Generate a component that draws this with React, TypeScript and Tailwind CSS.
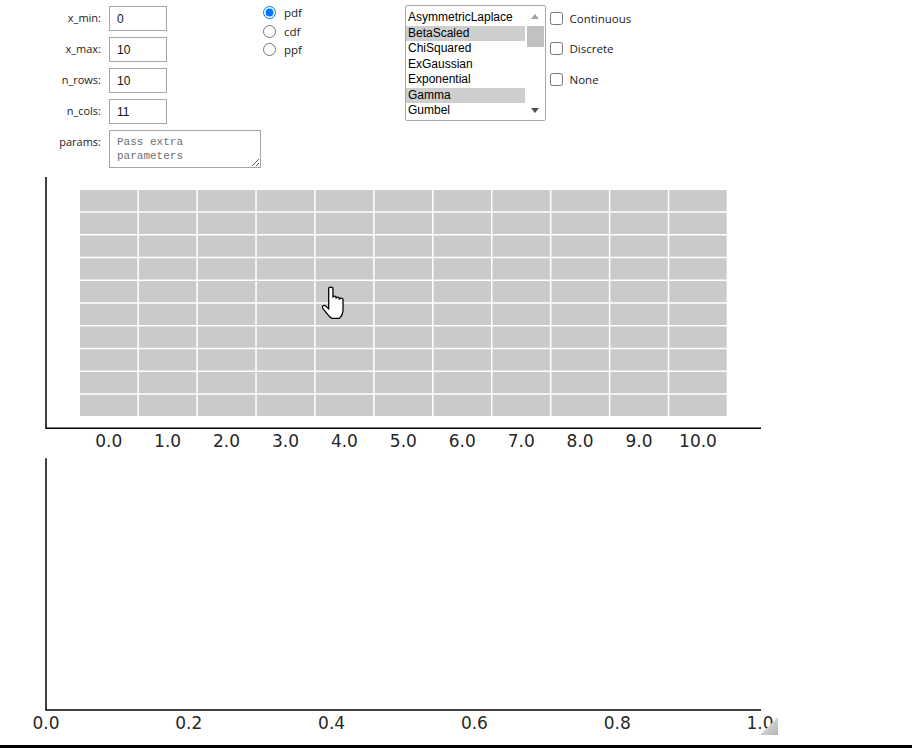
import React from 'react';

const labelFont = { fontFamily: '"Open Sans", "Noto Sans", sans-serif' };
const arial = { fontFamily: '"Liberation Sans", Arial, sans-serif' };
const plotFont = '"DejaVu Sans", sans-serif';

const fields = [
  { label: 'x_min:', value: '0' },
  { label: 'x_max:', value: '10' },
  { label: 'n_rows:', value: '10' },
  { label: 'n_cols:', value: '11' },
];

const dists = ['AsymmetricLaplace', 'BetaScaled', 'ChiSquared', 'ExGaussian', 'Exponential', 'Gamma', 'Gumbel'];
const selected = ['BetaScaled', 'Gamma'];

function HeatmapPlot() {
  const rows = 10;
  const cols = 11;
  const cells = [];
  for (let r = 0; r < rows; r++) {
    for (let c = 0; c < cols; c++) {
      cells.push(
        <rect key={`${r}-${c}`} x={80 + c * 58.93} y={20 + r * 22.75} width={57.4} height={21.25} fill="#cacaca" />
      );
    }
  }
  return (
    <svg width={912} height={288} className="block">
      {cells}
      <line x1={46} y1={7} x2={46} y2={258.3} stroke="#000" strokeWidth={1.5} />
      <line x1={45.3} y1={258.3} x2={761} y2={258.3} stroke="#000" strokeWidth={1.5} />
      {Array.from({ length: cols }).map((_, c) => (
        <text key={c} x={80 + c * 58.93 + 28.7} y={277} textAnchor="middle" fontSize={17} fill="#262626" fontFamily={plotFont}>
          {c.toFixed(1)}
        </text>
      ))}
    </svg>
  );
}

function LinePlot() {
  return (
    <svg width={912} height={287} className="block">
      <defs>
        <linearGradient id="grip" x1="0" y1="0" x2="1" y2="1">
          <stop offset="0" stopColor="#ececec" />
          <stop offset="1" stopColor="#b4b4b4" />
        </linearGradient>
      </defs>
      <line x1={46} y1={0.3} x2={46} y2={252} stroke="#000" strokeWidth={1.5} />
      <line x1={45.3} y1={252} x2={761} y2={252} stroke="#000" strokeWidth={1.5} />
      {[0, 0.2, 0.4, 0.6, 0.8, 1.0].map((v, i) => (
        <text key={i} x={46 + i * 142.8} y={271} textAnchor="middle" fontSize={17} fill="#262626" fontFamily={plotFont}>
          {v.toFixed(1)}
        </text>
      ))}
      <polygon points="778,259 778,277 760,277" fill="url(#grip)" />
    </svg>
  );
}

export default function App() {
  return (
    <div className="relative w-[912px] h-[748px] bg-white overflow-hidden">
      {/* controls */}
      <div className="flex h-[170px]">
        <div className="flex flex-col gap-[6px] pt-[6px]">
          {fields.map((f) => (
            <div key={f.label} className="flex items-center">
              <span className="w-[101px] text-right text-[11px] text-[#222]" style={labelFont}>{f.label}</span>
              <div className="ml-[8px] w-[58px] h-[25px] border border-[#a5a5a5] bg-white pl-[7px] flex items-center text-[12px] text-[#111]" style={arial}>
                {f.value}
              </div>
            </div>
          ))}
          <div className="flex items-start">
            <span className="w-[101px] text-right text-[11px] text-[#222] pt-[4px]" style={labelFont}>params:</span>
            <textarea
              readOnly
              placeholder={'Pass extra\nparameters'}
              className="ml-[8px] w-[152px] h-[38px] border border-[#a5a5a5] pl-[7px] pt-[4px] text-[11px] leading-[14px] placeholder:text-[#6f6f6f] resize-y outline-none"
              style={{ fontFamily: '"Liberation Mono", monospace' }}
            />
          </div>
        </div>

        {/* radio group */}
        <div className="ml-[2px] w-[142px] pt-[3.5px] flex flex-col">
          {['pdf', 'cdf', 'ppf'].map((k, i) => (
            <label key={k} className="flex items-center h-[18.5px]">
              <input type="radio" name="kind" defaultChecked={i === 0} className="m-0 w-[13px] h-[13px]" />
              <span className="ml-[8px] text-[11.5px] text-[#222]" style={labelFont}>{k}</span>
            </label>
          ))}
        </div>

        {/* distributions listbox */}
        <div className="mt-[5px] w-[141px] h-[116px] border border-[#a9a9a9] rounded-[2px] bg-white flex">
          <div className="flex-1 pt-[4px] text-[12px] text-black" style={arial}>
            {dists.map((d) => (
              <div
                key={d}
                className={`h-[15.55px] leading-[15.55px] pl-[2px] ${selected.includes(d) ? 'bg-[#cecece]' : ''}`}
              >
                {d}
              </div>
            ))}
          </div>
          <div className="w-[20px] flex flex-col items-center pt-[8px]">
            <div className="w-0 h-0 border-l-[4.5px] border-r-[4.5px] border-b-[5px] border-l-transparent border-r-transparent border-b-[#a3a3a3]" />
            <div className="mt-[7px] w-[17px] h-[21px] bg-[#c1c1c1]" />
            <div className="mt-auto mb-[7px] w-0 h-0 border-l-[4.5px] border-r-[4.5px] border-t-[5px] border-l-transparent border-r-transparent border-t-[#505050]" />
          </div>
        </div>

        {/* checkboxes */}
        <div className="ml-[3.5px] pt-[3px] flex flex-col">
          {['Continuous', 'Discrete', 'None'].map((k) => (
            <label key={k} className="flex items-center h-[30.5px]">
              <input type="checkbox" className="m-0 w-[13px] h-[13px]" />
              <span className="ml-[7px] text-[11.5px] text-[#222]" style={labelFont}>{k}</span>
            </label>
          ))}
        </div>
      </div>

      <HeatmapPlot />
      <LinePlot />
      <div className="h-[3px] bg-black" />

      {/* mouse cursor over the heatmap */}
      <svg className="absolute left-[321px] top-[286px]" width={26} height={34} viewBox="0 0 24 32">
        <path
          d="M7 2.5 C7 0.5 11 0.5 11 2.5 L11 11 C11 9 14 9 14 11 L14 12 C14 10 17 10 17 12 L17 13 C17 11 20.5 11 20.5 13 L20.5 22 C20.5 26 19 28.5 17 30.5 L10 30.5 C8 29.5 4.5 25 1.5 21 C0.3 19.2 2.3 17.3 4.2 18.8 L7 21.5 Z"
          fill="#fff"
          stroke="#000"
          strokeWidth={1.2}
        />
      </svg>
    </div>
  );
}
